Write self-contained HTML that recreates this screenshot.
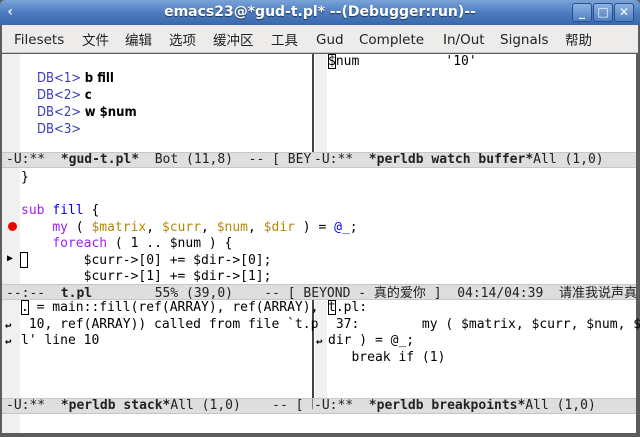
<!DOCTYPE html>
<html><head><meta charset="utf-8"><style>
*{margin:0;padding:0;box-sizing:border-box}
body{width:640px;height:437px;overflow:hidden;background:#5c5c5c;position:relative;font-family:"DejaVu Sans Mono","Liberation Mono","Noto Sans CJK SC",monospace;font-size:13px;color:#000}
.a{position:absolute;white-space:pre;line-height:16px}
#title{position:absolute;left:0;top:0;width:640px;height:25px;background:linear-gradient(#7aa3d8,#4d7cc0 50%,#3b68ad);border-radius:5px 5px 0 0}
#title .t{position:absolute;left:0;width:640px;top:4px;text-align:center;color:#fff;font-family:"DejaVu Sans","Liberation Sans",sans-serif;font-size:14px;font-weight:bold;text-shadow:0 1px 1px #234}
.btn{position:absolute;top:3px;width:20px;height:19px;border:1px solid #2c4f86;border-radius:3px;background:linear-gradient(#8cb2e2,#4f7fc2);color:#fff;font-family:"DejaVu Sans",sans-serif;font-weight:bold;font-size:12px;text-align:center;line-height:17px}
#menu{position:absolute;left:2px;top:25px;width:636px;height:28px;background:#eeecea;border-bottom:1px solid #c8c6c2;font-family:"DejaVu Sans",sans-serif;font-size:13.5px;color:#222}
#menu span{position:absolute;top:7px;line-height:16px}
#menu span.c{top:6px;font-family:"Noto Sans CJK SC",sans-serif;font-size:13.5px;line-height:16px}
.win{position:absolute;background:#fff}
.fr{position:absolute;background:#f0f0f0}
.ml{position:absolute;height:16px;background:#dedede;border-top:1px solid #c6c6c6;border-bottom:1px solid #c6c6c6;line-height:14px;white-space:pre;overflow:hidden;color:#222;padding-left:4px}
.ml .z{font-family:"Noto Sans CJK SC",sans-serif;font-size:13px}
.vd{position:absolute;width:2px;background:#444}
b{font-weight:bold}
.kw{color:#a020f0}.fn{color:#0000ff}.v{color:#b8860b}.db{color:#3a3ab8;font-family:"DejaVu Sans Condensed","DejaVu Sans",sans-serif}
.bp{font-family:"DejaVu Sans Condensed","DejaVu Sans",sans-serif}
.cur{outline:1px solid #000;outline-offset:-1px}
.ar{position:absolute;font-size:9px}
</style></head><body>
<div id="title"><div style="position:absolute;left:6px;top:4px;width:16px;height:16px;color:#fff;font-weight:bold;font-size:14px">&#x2039;</div><div class="t">emacs23@*gud-t.pl*  --(Debugger:run)--</div>
<div class="btn" style="left:572px">_</div><div class="btn" style="left:593px">□</div><div class="btn" style="left:614px">✕</div></div>
<div id="menu"><span style="left:12px">Filesets</span><span class="c" style="left:80px">文件</span><span class="c" style="left:123px">编辑</span><span class="c" style="left:167px">选项</span><span class="c" style="left:211px">缓冲区</span><span class="c" style="left:269px">工具</span><span style="left:314px">Gud</span><span style="left:357px">Complete</span><span style="left:441px">In/Out</span><span style="left:498px">Signals</span><span class="c" style="left:563px">帮助</span></div>

<div class="win" style="left:2px;top:54px;width:634px;height:379px"></div>
<div class="fr" style="left:2px;top:54px;width:18px;height:379px"></div>
<div class="fr" style="left:315px;top:54px;width:12px;height:98px"></div>
<div class="fr" style="left:315px;top:301px;width:12px;height:97px"></div>
<div class="vd" style="left:312px;top:54px;height:99px"></div>
<div class="vd" style="left:312px;top:300px;height:99px"></div>

<div class="a bp" style="left:37px;top:70px;line-height:17px"><span class="db">DB&lt;1&gt;</span> <b>b fill</b>
<span class="db">DB&lt;2&gt;</span> <b>c</b>
<span class="db">DB&lt;2&gt;</span> <b>w $num</b>
<span class="db">DB&lt;3&gt;</span></div>
<div class="a" style="left:328px;top:54px"><span class="cur">$</span>num           '10'</div>
<div class="ml" style="left:2px;top:152px;width:312px">-U:**  <b>*gud-t.pl*</b>  Bot (11,8)  -- [ BEY</div>
<div class="ml" style="left:313px;top:152px;width:323px;padding-left:1px">-U:**  <b>*perldb watch buffer*</b>All (1,0)      -</div>

<div class="a" style="left:21px;top:170px;line-height:16.5px">}

<span class="kw">sub</span> <span class="fn">fill</span> {
    <span class="kw">my</span> ( <span class="v">$matrix</span>, <span class="v">$curr</span>, <span class="v">$num</span>, <span class="v">$dir</span> ) = <span class="fn">@_</span>;
    <span class="kw">foreach</span> ( 1 .. $num ) {
        $curr-&gt;[0] += $dir-&gt;[0];
        $curr-&gt;[1] += $dir-&gt;[1];</div>
<div style="position:absolute;left:8px;top:222px;width:9px;height:9px;border-radius:50%;background:#e00"></div>
<div class="ar" style="left:7px;top:253px;font-size:10px">▶</div>
<div style="position:absolute;left:20px;top:252px;width:8px;height:16px;border:1px solid #000"></div>
<div class="ml" style="left:2px;top:284px;width:634px">--:--  <b>t.pl</b>        55% (39,0)    -- [ BEYOND - <span class="z">真的爱你</span> ]  04:14/04:39  <span class="z">请准我说声真</span></div>

<div class="a" style="left:21px;top:300px;line-height:16.5px"><span class="cur">.</span> = main::fill(ref(ARRAY), ref(ARRAY),
 10, ref(ARRAY)) called from file `t.p
l' line 10</div>
<div class="ar" style="left:5px;top:319px;font-size:11px;font-weight:bold">↩</div>
<div class="ar" style="left:5px;top:335px;font-size:11px;font-weight:bold">↩</div>
<div class="ar" style="left:316px;top:335px;font-size:11px;font-weight:bold">↩</div>
<div class="a" style="left:328px;top:300px;line-height:16.5px"><span class="cur">t</span>.pl:
 37:        my ( $matrix, $curr, $num, $
dir ) = @_;
   break if (1)</div>
<div class="ml" style="left:2px;top:398px;width:312px">-U:**  <b>*perldb stack*</b>All (1,0)    -- [ E</div>
<div class="ml" style="left:313px;top:398px;width:323px;padding-left:1px">-U:**  <b>*perldb breakpoints*</b>All (1,0)      --</div>
</body></html>
